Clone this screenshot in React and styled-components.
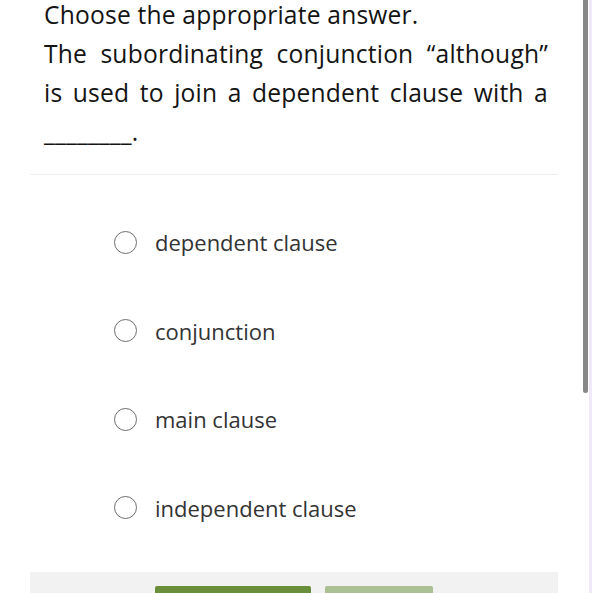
import styled, { createGlobalStyle } from "styled-components";

const GlobalStyle = createGlobalStyle`
  html, body {
    margin: 0;
    padding: 0;
    background: #ffffff;
    overflow: hidden;
  }
  body {
    font-family: "Open Sans", "Noto Sans", sans-serif;
  }
`;

const options = [
  "dependent clause",
  "conjunction",
  "main clause",
  "independent clause",
];

export default function App() {
  return (
    <>
      <GlobalStyle />
      <Page>
        <Question>
          <Instruction>Choose the appropriate answer.</Instruction>
          <Prompt>
            The subordinating conjunction “although” is used to join a dependent
            clause with a ________.
          </Prompt>
        </Question>
        <Divider />
        <OptionList>
          {options.map((o) => (
            <Option key={o}>
              <Radio />
              <span>{o}</span>
            </Option>
          ))}
        </OptionList>
        <Footer>
          <Button primary aria-label="Submit" />
          <Button aria-label="Skip" />
        </Footer>
      </Page>
      <ScrollTrack>
        <ScrollThumb />
      </ScrollTrack>
    </>
  );
}

const Page = styled.div`
  width: 528px;
  margin-left: 30px;
`;

const Question = styled.div`
  padding: 0 10px 0 14px;
  font-size: 24.6px;
  letter-spacing: 0.2px;
  color: #141414;
`;

const Instruction = styled.p`
  margin: 0;
  line-height: 30px;
`;

const Prompt = styled.p`
  margin: 4px 0 0;
  line-height: 39px;
  text-align: justify;
  text-align-last: left;
`;

const Divider = styled.div`
  margin-top: 23px;
  height: 1px;
  background: #eeeeee;
`;

const OptionList = styled.div`
  padding: 23px 0 0 84px;
  display: flex;
  flex-direction: column;
`;

const Option = styled.label`
  height: 88.5px;
  display: flex;
  align-items: center;
  gap: 18px;
  font-size: 22px;
  color: #333333;
`;

const Radio = styled.span`
  width: 23px;
  height: 23px;
  box-sizing: border-box;
  border: 1.6px solid #6e6e6e;
  border-radius: 50%;
  flex: none;
`;

const Footer = styled.div`
  margin-top: 20px;
  background: #f2f2f2;
  padding-top: 14px;
  height: 80px;
  display: flex;
  justify-content: center;
  gap: 14px;
`;

const Button = styled.button`
  width: ${({ primary }) => (primary ? "156px" : "108px")};
  height: 44px;
  border: none;
  border-radius: 2px;
  background: ${({ primary }) => (primary ? "#6a8f3b" : "#abc194")};
`;

const ScrollTrack = styled.div`
  position: fixed;
  top: 0;
  right: 0;
  width: 9px;
  height: 100%;
  background: linear-gradient(to right, #ffffff 0 6px, #f1e8f8 6px);
`;

const ScrollThumb = styled.div`
  width: 5px;
  height: 393px;
  background: #888888;
  border-radius: 0 0 3px 3px;
`;
